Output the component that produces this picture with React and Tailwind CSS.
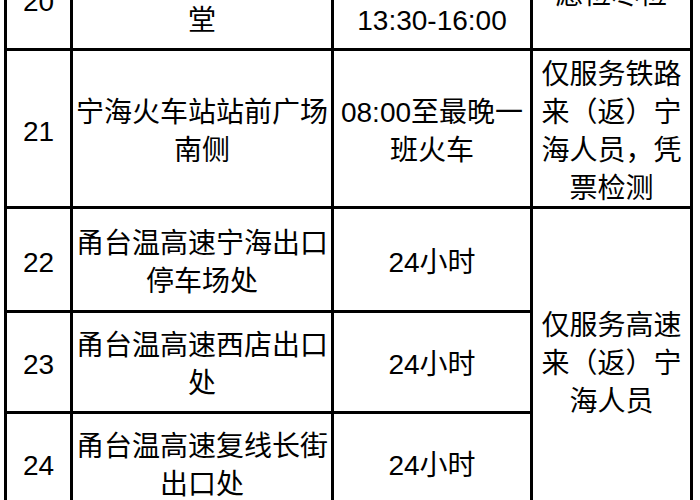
const font = { fontFamily: '"Liberation Sans", "Noto Sans CJK SC", sans-serif' };

function Cell({ lines, className = "" }) {
  return (
    <div
      className={`flex flex-col items-center justify-center border-r-[3px] border-b-[3px] border-black pt-[6px] text-center text-[28px] leading-[38px] text-black ${className}`}
    >
      {lines.map((line, i) => (
        <div key={i} className="whitespace-nowrap">
          {line}
        </div>
      ))}
    </div>
  );
}

const rows = [
  { no: "21", place: ["宁海火车站站前广场", "南侧"], time: ["08:00至最晚一", "班火车"] },
  { no: "22", place: ["甬台温高速宁海出口", "停车场处"], time: ["24小时"] },
  { no: "23", place: ["甬台温高速西店出口", "处"], time: ["24小时"] },
  { no: "24", place: ["甬台温高速复线长街", "出口处"], time: ["24小时"] },
];

export default function App() {
  return (
    <div className="h-[500px] w-[700px] overflow-hidden bg-white" style={font}>
      <div className="ml-[4px] mt-[-50px] grid w-[689px] grid-cols-[66px_261px_199px_160px] grid-rows-[101px_158px_104px_101px_101px] border-l-[3px] border-black box-content">
        {/* row 20, mostly scrolled off */}
        <Cell lines={["20"]} />
        <Cell lines={["西店镇文化礼", "堂"]} />
        <Cell lines={["08:00-11:30", "13:30-16:00"]} />
        <Cell lines={["应检尽检、", "愿检尽检"]} className="!justify-end overflow-hidden pb-[34px]" />

        {rows.map((r, idx) => (
          <div key={r.no} className="contents">
            <Cell lines={[r.no]} />
            <Cell lines={r.place} />
            <Cell lines={r.time} />
            {idx === 0 ? (
              <Cell lines={["仅服务铁路", "来（返）宁", "海人员，凭", "票检测"]} />
            ) : null}
            {idx === 1 ? (
              <Cell lines={["仅服务高速", "来（返）宁", "海人员"]} className="row-span-3" />
            ) : null}
          </div>
        ))}
      </div>
    </div>
  );
}
